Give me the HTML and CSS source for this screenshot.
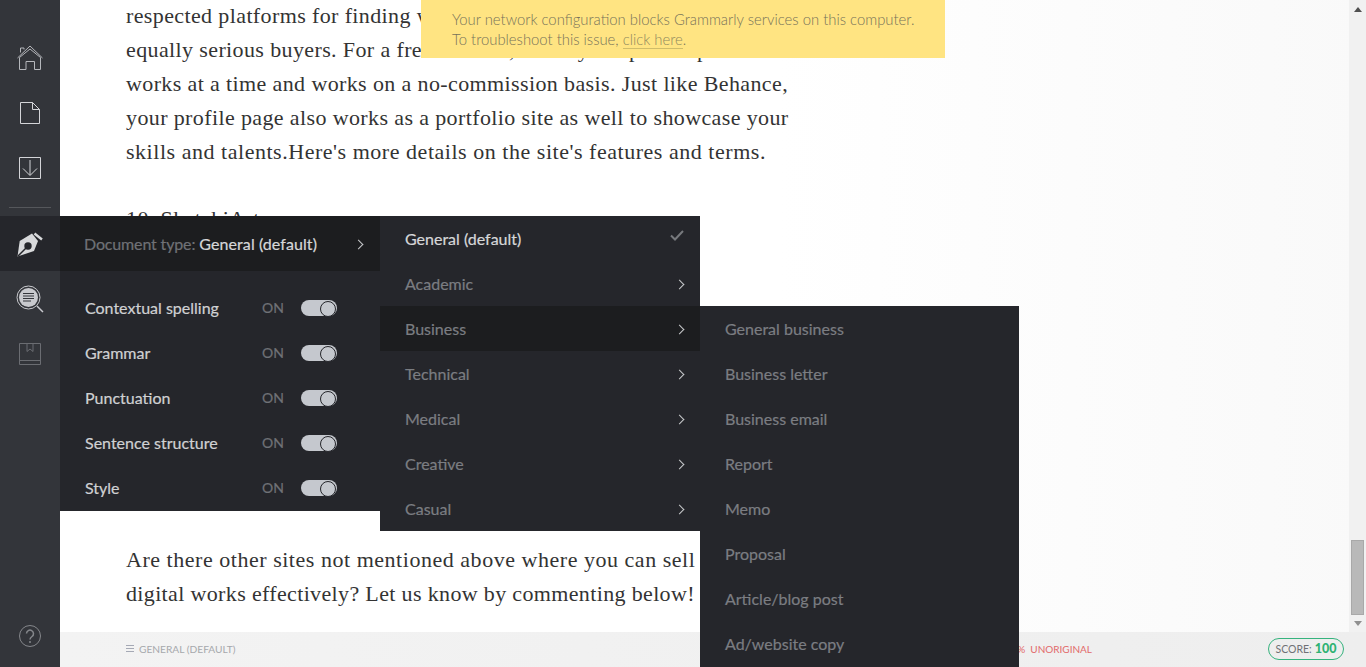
FILE: index.html
```html
<!DOCTYPE html>
<html lang="en">
<head>
<meta charset="utf-8">
<title>Grammarly</title>
<link rel="stylesheet" href="styles.css">
</head>
<body>
<div class="app">
  <nav class="rail">
    <div class="rail-top">
      <a class="rail-btn"><svg width="26" height="26" viewBox="0 0 26 26" fill="none" stroke="#b5b7bb" stroke-width="1"><path d="M.5 13 13 1l12.500 12"/><path d="M3.500 7.500V3h3.500v1.500"/><path d="M2.500 12.500V24.500h6.500v-8h8.500v8h6v-12"/><path d="M2.500 12.500 13 4l10.500 8.500"/></svg></a>
      <a class="rail-btn"><svg width="20" height="24" viewBox="0 0 20 24" fill="none" stroke="#d4d5d8" stroke-width="1"><path d="M.5 1.500h12l7 7v14H.5zM12.500 1.500v7h7"/></svg></a>
      <a class="rail-btn"><svg width="24" height="24" viewBox="0 0 24 24" fill="none" stroke="#d4d5d8" stroke-width="1"><path d="M1.500 1.500h21v21h-21zM12 4v15M5 12.500l7 7 7-7"/></svg></a>
      <div class="rail-rule"></div>
    </div>
    <a class="rail-btn rail-active"><svg width="26" height="26" viewBox="0 0 26 26"><path fill="#d8d9db" d="M2.700 10 15 2.500 21 10 17 20 .5 25.500z"/><path fill="none" stroke="#25262b" stroke-width="1.500" d="M1 25 10 16"/><circle cx="11" cy="15" r="3.700" fill="#25262b"/><path stroke="#d8d9db" stroke-width="2.500" d="M17.500 2.500 25 8.500"/></svg></a>
    <a class="rail-btn rail-mid"><svg width="28" height="28" viewBox="0 0 28 28" fill="none"><circle cx="12.500" cy="12.500" r="11.500" stroke="#c9cace"/><circle cx="12.500" cy="12.500" r="9.500" fill="#c9cace"/><path stroke="#33353a" d="M7 8.500h11M7 11h11M7 13.500h11M7 16h8"/><path stroke="#c9cace" stroke-width="1.500" d="M21 21l6 6"/></svg></a>
    <a class="rail-btn rail-book"><svg width="24" height="24" viewBox="0 0 24 24" fill="none" stroke="#6b6d72" stroke-width="1"><path d="M1.500 1.500h21v21h-21zM1.500 18.500h21M9 1.500v8l3-2.500 3 2.500v-8"/></svg></a>
    <a class="rail-btn rail-help"><svg width="24" height="24" viewBox="0 0 24 24" fill="none" stroke="#85878b"><circle cx="12" cy="12" r="10.500"/><path stroke-width="1.500" d="M8.500 9.500a3.500 3.500 0 1 1 5.500 3c-1.300.9-2 1.500-2 3"/><path stroke-width="1.500" d="M12 17v2"/></svg></a>
  </nav>

  <main class="doc">
    <div class="doc-scroll">
      <article class="article">
        <p class="line">respected platforms for finding well-paying clients and</p>
        <p class="line">equally serious buyers. For a free account, it lets you upload up to ten</p>
        <p class="line">works at a time and works on a no-commission basis. Just like Behance,</p>
        <p class="line">your profile page also works as a portfolio site as well to showcase your</p>
        <p class="line wide">skills and talents.Here's more details on the site's features and terms.</p>
        <p class="line heading">10. SketchiArt</p>
        <p class="line closing wide">Are there other sites not mentioned above where you can sell your</p>
        <p class="line tight">digital works effectively? Let us know by commenting below!</p>
      </article>
      <div class="scrollbar">
        <div class="scroll-up"></div>
        <div class="scroll-thumb"></div>
        <div class="scroll-arrow"></div>
      </div>
    </div>
    <footer class="status">
      <div class="status-type"><span class="burger"></span>GENERAL (DEFAULT)</div>
      <div class="status-right">
        <span class="unoriginal">% &nbsp;UNORIGINAL</span>
        <span class="score">SCORE: <b>100</b></span>
      </div>
    </footer>
    <div class="notice">Your network configuration blocks Grammarly services on this computer.<br>To troubleshoot this issue, <a class="notice-link">click here</a>.</div>
  </main>

  <div class="menus">
    <section class="panel panel-checks">
      <div class="panel-head"><span class="head-label">Document type:</span>&nbsp;<span class="head-value">General (default)</span><i class="chev head-chev"></i></div>
      <ul class="checks">
        <li class="check"><span class="check-name">Contextual spelling</span><span class="on">ON</span><span class="toggle"></span></li>
        <li class="check"><span class="check-name">Grammar</span><span class="on">ON</span><span class="toggle"></span></li>
        <li class="check"><span class="check-name">Punctuation</span><span class="on">ON</span><span class="toggle"></span></li>
        <li class="check"><span class="check-name">Sentence structure</span><span class="on">ON</span><span class="toggle"></span></li>
        <li class="check"><span class="check-name">Style</span><span class="on">ON</span><span class="toggle"></span></li>
      </ul>
    </section>
    <ul class="panel panel-types">
      <li class="row row-current">General (default)<svg class="tick" width="14" height="11" viewBox="0 0 14 11" fill="none" stroke="#77797d" stroke-width="2"><path d="M1 5.500 5 9.500 13 1"/></svg></li>
      <li class="row">Academic<i class="chev"></i></li>
      <li class="row row-open">Business<i class="chev"></i></li>
      <li class="row">Technical<i class="chev"></i></li>
      <li class="row">Medical<i class="chev"></i></li>
      <li class="row">Creative<i class="chev"></i></li>
      <li class="row">Casual<i class="chev"></i></li>
    </ul>
    <ul class="panel panel-sub">
      <li class="row">General business</li>
      <li class="row">Business letter</li>
      <li class="row">Business email</li>
      <li class="row">Report</li>
      <li class="row">Memo</li>
      <li class="row">Proposal</li>
      <li class="row">Article/blog post</li>
      <li class="row">Ad/website copy</li>
    </ul>
  </div>
</div>
</body>
</html>
```
FILE: styles.css
```css
* { box-sizing: border-box; }
html, body { margin: 0; height: 100%; overflow: hidden; }
body { font-family: Lato, "Liberation Sans", sans-serif; background: #fff; }
ul { list-style: none; margin: 0; padding: 0; }

.app { display: flex; height: 667px; width: 1366px; position: relative; overflow: hidden; }

.rail { width: 60px; flex: none; background: #33353a; display: flex; flex-direction: column; }
.rail-top { height: 216px; padding-top: 30px; display: flex; flex-direction: column; }
.rail-btn { height: 55px; display: flex; align-items: center; justify-content: center; flex: none; }
.rail-active { background: #25262b; }
.rail-mid { height: 56px; }
.rail-book { height: 54px; }
.rail-help { margin-top: auto; height: 60px; padding-bottom: 3px; }
.rail-rule { height: 1px; background: #55575b; margin: 12px 9px 0; }

.doc { flex: 1; min-width: 0; display: flex; flex-direction: column; position: relative; }
.doc-scroll { flex: 1; min-height: 0; display: flex; background: linear-gradient(90deg, #fff 0, #fff 55%, #f9f9f9 100%); }
.article { flex: 1; padding: 0 0 0 66px; margin-top: -1px; font-family: "Liberation Serif", serif; font-size: 22px; line-height: 34px; color: #333; letter-spacing: .38px; }
.line { margin: 0; white-space: nowrap; height: 34px; }
.wide { letter-spacing: .53px; }
.tight { letter-spacing: .35px; }
.heading { margin-top: 33px; }
.closing { margin-top: 307px; }

.scrollbar { width: 17px; flex: none; background: #f1f1f1; position: relative; }
.scroll-up { position: absolute; left: 5px; top: 7px; border: 4px solid transparent; border-bottom: 5px solid #505050; border-top: 0; }
.scroll-thumb { position: absolute; left: 2px; right: 2px; top: 540px; height: 75px; background: #b9b9b9; border: 1px solid #a9a9a9; }
.scroll-arrow { position: absolute; left: 5px; top: 621px; border: 4px solid transparent; border-top: 5px solid #8f8f8f; border-bottom: 0; }

.status { height: 35px; flex: none; background: linear-gradient(90deg, #f3f3f3, #eeeeee); display: flex; align-items: center; justify-content: space-between; padding: 0 22px 2px 66px; font-size: 10.200px; color: #a6a8ac; }
.status-type { display: flex; align-items: center; gap: 5px; }
.burger { width: 8px; height: 7px; border-top: 1px solid #a5a9b5; border-bottom: 1px solid #a5a9b5; position: relative; display: block; background: linear-gradient(#a5a9b5,#a5a9b5) center / 100% 1px no-repeat; }
.status-right { display: flex; align-items: center; gap: 176px; }
.unoriginal { color: #e26a6a; font-size: 10px; }
.score { height: 22px; width: 76px; border: 1px solid #36b37e; border-radius: 11px; display: flex; align-items: center; justify-content: center; color: #6f7175; font-size: 10.500px; gap: 3px; }
.score b { color: #2fb273; font-size: 12.500px; font-weight: 900; }

.notice { position: absolute; left: 361px; top: 0; width: 524px; height: 58px; background: #ffe482; color: #77735a; font-size: 14.850px; font-weight: 300; line-height: 20px; padding: 9px 0 0 31px; }
.notice-link { color: #8f8960; border-bottom: 1px solid #cfbc6a; }

.menus { position: absolute; left: 60px; top: 216px; display: flex; align-items: flex-start; font-size: 16px; -webkit-text-stroke: .2px; }
.panel { background: #25262b; color: #7b7d82; }
.panel-checks { width: 320px; height: 295px; }
.panel-head { height: 55px; background: #1c1d1f; display: flex; align-items: center; padding-left: 24px; position: relative; }
.head-label { color: #6f7176; letter-spacing: -.15px; }
.head-value { color: #d6d7d9; letter-spacing: .08px; }
.chev.head-chev { right: 18px; }
.checks { padding-top: 15px; }
.check { height: 45px; display: flex; align-items: center; padding-left: 25px; }
.check-name { width: 177px; color: #d0d1d3; position: relative; top: -1px; }
.on { width: 39px; font-size: 14px; color: #6f7176; position: relative; top: -1px; }
.toggle { width: 36px; height: 16px; border-radius: 8px; background: #c5c8ce; position: relative; top: -1px; }
.toggle::after { content: ""; position: absolute; right: 1px; top: 1px; width: 14px; height: 14px; border-radius: 50%; background: #c5c8ce; border: 1px solid #25262b; }

.panel-types { width: 320px; height: 315px; }
.panel-sub { width: 319px; height: 361px; margin-top: 90px; }
.row { height: 45px; display: flex; align-items: center; padding-left: 25px; position: relative; }
.row-current { color: #d6d7d9; }
.row-open { background: #1c1d1f; }
.tick { position: absolute; right: 16px; top: 14px; }
.chev { position: absolute; right: 17px; top: 50%; width: 7px; height: 7px; margin-top: -3px; border-top: 1.800px solid #c9cacc; border-right: 1.800px solid #c9cacc; transform: rotate(45deg); }
```
